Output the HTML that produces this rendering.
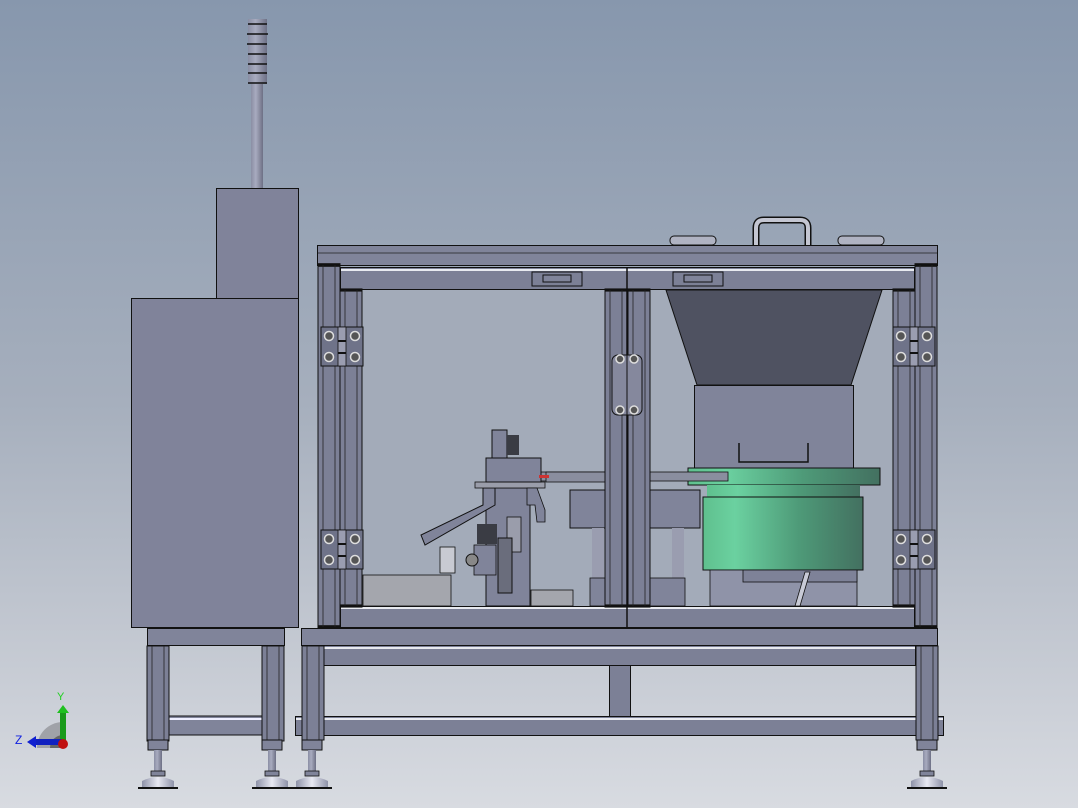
<!DOCTYPE html>
<html><head><meta charset="utf-8"><style>
html,body{margin:0;padding:0;width:1078px;height:808px;overflow:hidden}
svg{display:block}
</style></head><body>
<svg width="1078" height="808" viewBox="0 0 1078 808" xmlns="http://www.w3.org/2000/svg" font-family="Liberation Sans, sans-serif">
<defs>
<linearGradient id="bg" x1="0" y1="0" x2="0" y2="1">
<stop offset="0" stop-color="#8797ad"/><stop offset="0.5" stop-color="#a6afbd"/><stop offset="0.8" stop-color="#c4c9d2"/><stop offset="1" stop-color="#d8dbe1"/>
</linearGradient>
<linearGradient id="grn" x1="0" y1="0" x2="1" y2="0">
<stop offset="0" stop-color="#5fc08e"/><stop offset="0.2" stop-color="#6bd1a0"/><stop offset="0.6" stop-color="#4e9a78"/><stop offset="1" stop-color="#437060"/>
</linearGradient>
<linearGradient id="pole" x1="0" y1="0" x2="1" y2="0">
<stop offset="0" stop-color="#8a8ea4"/><stop offset="0.4" stop-color="#a8abbf"/><stop offset="1" stop-color="#6d7085"/>
</linearGradient>
<linearGradient id="footg" x1="0" y1="0" x2="1" y2="0">
<stop offset="0" stop-color="#8e92a8"/><stop offset="0.5" stop-color="#e8e9f2"/><stop offset="1" stop-color="#8e92a8"/>
</linearGradient>
<g id="hinge">
<rect x="0" y="0" width="42" height="39" fill="#6f7389" stroke="#111" stroke-width="1"/>
<rect x="17" y="0" width="8" height="39" fill="#9a9db0" stroke="#111" stroke-width="0.8"/>
<line x1="17" y1="14" x2="25" y2="14" stroke="#111" stroke-width="2"/>
<line x1="17" y1="26" x2="25" y2="26" stroke="#111" stroke-width="2"/>
<circle cx="8" cy="9" r="4.5" fill="#555" stroke="#ddd" stroke-width="1.5"/><circle cx="34" cy="9" r="4.5" fill="#555" stroke="#ddd" stroke-width="1.5"/>
<circle cx="8" cy="30" r="4.5" fill="#555" stroke="#ddd" stroke-width="1.5"/><circle cx="34" cy="30" r="4.5" fill="#555" stroke="#ddd" stroke-width="1.5"/>
</g>
<g id="post">
<rect x="0" y="0" width="22" height="100" fill="#7c8096" stroke="#111" stroke-width="1"/>
<line x1="5" y1="0" x2="5" y2="100" stroke="#222" stroke-width="0.8"/>
<line x1="17" y1="0" x2="17" y2="100" stroke="#222" stroke-width="0.8"/>
</g>
<g id="footx">
<rect x="-10" y="0" width="20" height="10" fill="#80849a" stroke="#111"/>
<rect x="-4" y="10" width="8" height="25" fill="url(#pole)"/>
<rect x="-7" y="31" width="14" height="5" fill="#80849a" stroke="#111" stroke-width="0.8"/>
<path d="M-16 47 L-16 41 Q0 33 16 41 L16 47Z" fill="url(#footg)"/>
<line x1="-20" y1="48" x2="20" y2="48" stroke="#111" stroke-width="2"/>
</g>
</defs>
<rect width="1078" height="808" fill="url(#bg)"/>

<rect x="251" y="84" width="12" height="105" fill="url(#pole)"/>
<rect x="248" y="19" width="19" height="65" fill="url(#pole)"/>
<g stroke="#111" stroke-width="1.6">
<line x1="248" y1="24" x2="267" y2="24"/><line x1="247" y1="34" x2="268" y2="34"/><line x1="247" y1="44" x2="267" y2="44"/>
<line x1="248" y1="54" x2="267" y2="54"/><line x1="248" y1="64" x2="267" y2="64"/><line x1="248" y1="73" x2="267" y2="73"/><line x1="248" y1="83" x2="267" y2="83"/>
</g>
<rect x="216.5" y="188.5" width="82" height="110" fill="#80839a" stroke="#111"/>
<rect x="131.5" y="298.5" width="167" height="329" fill="#80839a" stroke="#111"/>
<rect x="147.5" y="628.5" width="137" height="17" fill="#80849a" stroke="#111"/>
<rect x="167" y="716" width="96" height="19" fill="#80849a" stroke="#111"/>
<line x1="167" y1="719" x2="263" y2="719" stroke="#eef" stroke-width="2"/>
<g transform="translate(147,646) scale(1,0.95)"><use href="#post"/></g>
<g transform="translate(262,646) scale(1,0.95)"><use href="#post"/></g>
<use href="#footx" x="158" y="740"/><use href="#footx" x="272" y="740"/>

<rect x="340" y="267" width="575" height="360" fill="#a3abb9"/>
<path d="M666 290 L882 290 L851 385 L697 385Z" fill="#4f5261" stroke="#111"/>
<rect x="694.5" y="385.5" width="159" height="84" fill="#80849a" stroke="#111"/>
<path d="M739 443 L739 462 L808 462 L808 443" fill="none" stroke="#111" stroke-width="1.5"/>
<rect x="688" y="468" width="192" height="17" fill="url(#grn)" stroke="#111"/>
<rect x="707" y="485" width="153" height="12" fill="url(#grn)"/>
<rect x="703" y="497" width="160" height="73" fill="url(#grn)" stroke="#111"/>
<rect x="710" y="570" width="147" height="36" fill="#8f93a8" stroke="#111" stroke-width="0.8"/>
<rect x="743" y="570" width="114" height="12" fill="#7e8298" stroke="#111" stroke-width="0.8"/>
<path d="M795 606 L805 572 L810 572 L800 606Z" fill="#c8cad6" stroke="#111" stroke-width="0.8"/>
<rect x="520" y="472" width="208" height="9" fill="#8a8e9f" stroke="#111" stroke-width="0.8"/>
<rect x="650" y="490" width="50" height="38" fill="#80849a" stroke="#111"/>
<path d="M570 490 L605 490 L605 528 L570 528 L570 505Z" fill="#80849a" stroke="#111"/>
<rect x="592" y="528" width="12" height="50" fill="#9a9db0"/><rect x="672" y="528" width="12" height="50" fill="#9a9db0"/>
<rect x="590" y="578" width="15" height="28" fill="#80849a" stroke="#111" stroke-width="0.8"/>
<rect x="650" y="578" width="35" height="28" fill="#80849a" stroke="#111" stroke-width="0.8"/>
<rect x="363" y="575" width="88" height="31" fill="#a4a6ad" stroke="#111" stroke-width="0.8"/>
<rect x="531" y="590" width="42" height="16" fill="#a4a6ad" stroke="#111" stroke-width="0.8"/>
<rect x="486" y="488" width="44" height="118" fill="#80849a" stroke="#111"/>
<path d="M483 488 L495 488 L495 505 L425 545 L421 535 L483 505Z" fill="#80849a" stroke="#111"/>
<rect x="475" y="482" width="70" height="6" fill="#9a9daa" stroke="#111" stroke-width="0.8"/>
<rect x="486" y="458" width="55" height="24" fill="#80849a" stroke="#111"/>
<rect x="492" y="430" width="15" height="28" fill="#80849a" stroke="#111"/>
<rect x="507" y="435" width="12" height="20" fill="#3a3c44"/>
<rect x="507" y="517" width="14" height="35" fill="#9a9dab" stroke="#111" stroke-width="0.8"/>
<rect x="498" y="538" width="14" height="55" fill="#6a6d7c" stroke="#111"/>
<path d="M527 488 L537 488 L545 510 L545 522 L537 522 L535 505 L527 505Z" fill="#80849a" stroke="#111" stroke-width="0.8"/>
<rect x="474" y="545" width="22" height="30" fill="#80849a" stroke="#111" stroke-width="0.8"/>
<circle cx="472" cy="560" r="6" fill="#888" stroke="#111"/>
<rect x="477" y="524" width="20" height="20" fill="#3a3c44"/>
<rect x="440" y="547" width="15" height="26" fill="#c8cad2" stroke="#111" stroke-width="0.8"/>
<rect x="546" y="472" width="70" height="10" fill="#8a8e9f" stroke="#111" stroke-width="0.8"/>
<rect x="539" y="475" width="10" height="3" fill="#c33"/>

<rect x="317.5" y="245.5" width="620" height="20" fill="#80849a" stroke="#111"/>
<line x1="318" y1="253" x2="937" y2="253" stroke="#222" stroke-width="0.8"/>
<path d="M756 245 L756 228 Q756 220 764 220 L800 220 Q808 220 808 228 L808 245" fill="none" stroke="#111" stroke-width="7"/>
<path d="M756 245 L756 228 Q756 220 764 220 L800 220 Q808 220 808 228 L808 245" fill="none" stroke="#c4c6d2" stroke-width="4"/>
<rect x="670" y="236" width="46" height="9" rx="4" fill="#b0b3c2" stroke="#111"/>
<rect x="838" y="236" width="46" height="9" rx="4" fill="#b0b3c2" stroke="#111"/>
<rect x="340.5" y="267.5" width="574" height="22" fill="#7c8096" stroke="#111"/>
<line x1="341" y1="270" x2="914" y2="270" stroke="#e8eaf0" stroke-width="2"/>
<rect x="532" y="272" width="50" height="14" fill="#7c8096" stroke="#111"/><rect x="543" y="275" width="28" height="7" fill="#80849a" stroke="#111"/>
<rect x="673" y="272" width="50" height="14" fill="#7c8096" stroke="#111"/><rect x="684" y="275" width="28" height="7" fill="#80849a" stroke="#111"/>
<rect x="340.5" y="606.5" width="574" height="21" fill="#7c8096" stroke="#111"/>
<line x1="341" y1="608" x2="914" y2="608" stroke="#e8eaf0" stroke-width="2"/>
<g transform="translate(318,265) scale(1,3.62)"><use href="#post"/></g>
<g transform="translate(340,290) scale(1,3.16)"><use href="#post"/></g>
<g transform="translate(605,290) scale(1,3.16)"><use href="#post"/></g>
<g transform="translate(628,290) scale(1,3.16)"><use href="#post"/></g>
<g transform="translate(893,290) scale(1,3.16)"><use href="#post"/></g>
<g transform="translate(915,265) scale(1,3.62)"><use href="#post"/></g>
<line x1="627" y1="268" x2="627" y2="628" stroke="#111" stroke-width="1.5"/>
<use href="#hinge" x="321" y="327"/><use href="#hinge" x="321" y="530"/>
<use href="#hinge" x="893" y="327"/><use href="#hinge" x="893" y="530"/>
<rect x="612" y="355" width="30" height="60" rx="6" fill="#85889d" stroke="#111"/>
<line x1="627" y1="355" x2="627" y2="415" stroke="#111"/>
<circle cx="620" cy="359" r="4" fill="#555" stroke="#ddd" stroke-width="1.5"/><circle cx="634" cy="359" r="4" fill="#555" stroke="#ddd" stroke-width="1.5"/>
<circle cx="620" cy="410" r="4" fill="#555" stroke="#ddd" stroke-width="1.5"/><circle cx="634" cy="410" r="4" fill="#555" stroke="#ddd" stroke-width="1.5"/>

<rect x="301.5" y="628.5" width="636" height="17" fill="#80849a" stroke="#111"/>
<rect x="322.5" y="645.5" width="593" height="20" fill="#7c8096" stroke="#111"/>
<line x1="323" y1="648" x2="915" y2="648" stroke="#e8eaf0" stroke-width="2"/>
<rect x="609.5" y="665.5" width="21" height="51" fill="#7c8096" stroke="#111"/>
<rect x="295.5" y="716.5" width="648" height="19" fill="#7c8096" stroke="#111"/>
<line x1="296" y1="719" x2="943" y2="719" stroke="#e8eaf0" stroke-width="2"/>
<g transform="translate(302,646) scale(1,0.94)"><use href="#post"/></g>
<g transform="translate(916,646) scale(1,0.94)"><use href="#post"/></g>
<use href="#footx" x="312" y="740"/><use href="#footx" x="927" y="740"/>

<path d="M37 748 A26 26 0 0 1 63 722 L63 748Z" fill="#a0a2a8"/>
<path d="M50 748 A13 13 0 0 1 63 735 L63 748Z" fill="#666"/>
<rect x="60" y="711" width="6" height="33" fill="#1a9a1a"/>
<path d="M57 713 L63 705 L69 713Z" fill="#20c020"/>
<rect x="34" y="739" width="28" height="6" fill="#1020c0"/>
<path d="M36 736 L27 742 L36 748Z" fill="#1020d0"/>
<circle cx="63" cy="744" r="5" fill="#c01010"/>
<text x="57" y="700" font-size="11" fill="#20d020">Y</text>
<text x="15" y="744" font-size="12" fill="#1020e0">Z</text>
</svg>
</body></html>
